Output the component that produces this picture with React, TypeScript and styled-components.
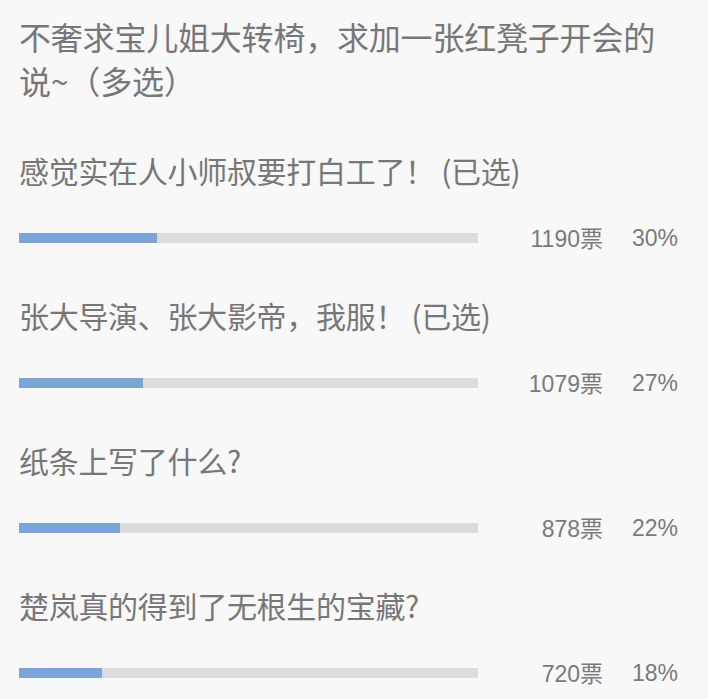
import React from "react";
import styled, { createGlobalStyle } from "styled-components";

const GlobalStyle = createGlobalStyle`
  html, body {
    margin: 0;
    padding: 0;
    background: #f8f8f9;
  }
  body {
    font-family: "Noto Sans CJK SC", "Liberation Sans", sans-serif;
  }
`;

const Page = styled.div`
  width: 708px;
  height: 699px;
  box-sizing: border-box;
  padding: 14px 30px 0 19px;
  background: #f8f8f9;
  overflow: hidden;
  color: #777777;
`;

const Title = styled.div`
  font-size: 32px;
  line-height: 44px;
  margin-bottom: 46px;
  letter-spacing: -0.2px;
  white-space: nowrap;
`;

const OptionList = styled.div`
  display: flex;
  flex-direction: column;
  gap: 41px;
`;

const Option = styled.div`
  display: flex;
  flex-direction: column;
  gap: 30px;
`;

const OptionText = styled.div`
  font-size: 30px;
  line-height: 44px;
  letter-spacing: -0.3px;
  white-space: nowrap;
`;

const StatsRow = styled.div`
  display: grid;
  grid-template-columns: 459px 125px 75px;
  align-items: center;
  height: 30px;
`;

const Track = styled.div`
  height: 10px;
  background: #dcdcde;
`;

const Fill = styled.div`
  height: 100%;
  background: #7ba4d8;
`;

const Num = styled.div`
  font-family: "Liberation Sans Narrow", "Liberation Sans", "Noto Sans CJK SC", sans-serif;
  font-size: 23px;
  line-height: 30px;
  text-align: right;
  color: #7a7a7a;
  white-space: nowrap;
`;

const Piao = styled.span`
  font-family: "Noto Sans CJK SC", sans-serif;
  font-size: 23px;
`;

const options = [
  { text: "感觉实在人小师叔要打白工了！ (已选)", votes: 1190, pct: 30 },
  { text: "张大导演、张大影帝，我服！ (已选)", votes: 1079, pct: 27 },
  { text: "纸条上写了什么?", votes: 878, pct: 22 },
  { text: "楚岚真的得到了无根生的宝藏?", votes: 720, pct: 18 },
];

export default function App() {
  return (
    <>
      <GlobalStyle />
      <Page>
        <Title>
          不奢求宝儿姐大转椅，求加一张红凳子开会的
          <br />
          说~（多选）
        </Title>
        <OptionList>
          {options.map((o) => (
            <Option key={o.text}>
              <OptionText>{o.text}</OptionText>
              <StatsRow>
                <Track>
                  <Fill style={{ width: `${o.pct}%` }} />
                </Track>
                <Num>
                  {o.votes}
                  <Piao>票</Piao>
                </Num>
                <Num>{o.pct}%</Num>
              </StatsRow>
            </Option>
          ))}
        </OptionList>
      </Page>
    </>
  );
}
